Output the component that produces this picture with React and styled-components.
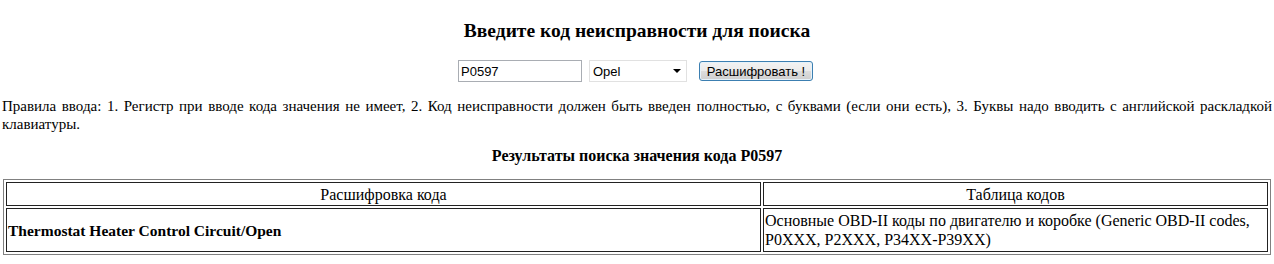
import React from 'react';
import styled, { createGlobalStyle } from 'styled-components';

const GlobalStyle = createGlobalStyle`
  body {
    margin: 0;
    background: #fff;
    color: #000;
    font-family: "Liberation Serif", "Times New Roman", serif;
  }
`;

const Page = styled.div`
  width: 1274px;
`;

const Title = styled.h3`
  margin: 20px 0 0;
  font-size: 19.5px;
  line-height: 22px;
  text-align: center;
  font-weight: bold;
`;

const SearchForm = styled.form`
  display: flex;
  justify-content: center;
  align-items: center;
  margin-top: 18px;
  padding-right: 3px;
  height: 22px;
  font-family: "Liberation Sans", Arial, sans-serif;
  font-size: 13px;
`;

const CodeInput = styled.input`
  box-sizing: border-box;
  width: 124px;
  height: 22px;
  margin: 0 7px 0 0;
  padding: 0 2px;
  border: 1px solid #a9adb3;
  font-family: inherit;
  font-size: 13px;
  color: #000;
  outline: none;
`;

const SelectWrap = styled.div`
  position: relative;
  width: 98px;
  height: 22px;
  margin-right: 12px;
`;

const Select = styled.select`
  box-sizing: border-box;
  width: 100%;
  height: 22px;
  appearance: none;
  border: 1px solid #e1e1e1;
  background: #fff;
  padding: 0 3px;
  font-family: inherit;
  font-size: 13px;
  color: #000;
  outline: none;
`;

const Caret = styled.span`
  position: absolute;
  right: 6px;
  top: 9px;
  width: 0;
  height: 0;
  border-left: 4px solid transparent;
  border-right: 4px solid transparent;
  border-top: 4px solid #000;
  pointer-events: none;
`;

const Button = styled.button`
  box-sizing: border-box;
  width: 114px;
  height: 20px;
  padding: 0;
  border: 1px solid #3c7fb1;
  border-radius: 3px;
  background: linear-gradient(#f2f2f2 0%, #ebebeb 50%, #dddddd 51%, #cfcfcf 100%);
  box-shadow: inset 0 0 0 1px #e6f2fa;
  font-family: inherit;
  font-size: 13px;
  color: #000;
`;

const Rules = styled.p`
  margin: 15px 0 0;
  padding: 0 2px;
  font-size: 15px;
  line-height: 18px;
  text-align: justify;
`;

const ResultTitle = styled.h4`
  margin: 14px 0 0;
  font-size: 16px;
  line-height: 18px;
  text-align: center;
  font-weight: bold;
`;

const Table = styled.table`
  box-sizing: border-box;
  width: 1268px;
  margin: 14px 0 0 3px;
  border: 1px solid #808080;
  border-spacing: 2px;
  table-layout: fixed;
  font-size: 16px;
`;

const Cell = styled.td`
  border: 1px solid #222;
  padding: 1px 1px;
  line-height: 19px;
  text-align: ${(p) => (p.$center ? 'center' : 'left')};
  font-weight: ${(p) => (p.$bold ? 'bold' : 'normal')};
  font-size: ${(p) => (p.$bold ? '15.5px' : '16px')};
  vertical-align: middle;
  height: ${(p) => p.$h}px;
`;

export default function App() {
  return (
    <Page>
      <GlobalStyle />
      <Title>Введите код неисправности для поиска</Title>
      <SearchForm onSubmit={(e) => e.preventDefault()}>
        <CodeInput type="text" defaultValue="P0597" />
        <SelectWrap>
          <Select defaultValue="Opel">
            <option>Opel</option>
          </Select>
          <Caret />
        </SelectWrap>
        <Button type="submit">Расшифровать !</Button>
      </SearchForm>
      <Rules>
        Правила ввода: 1. Регистр при вводе кода значения не имеет, 2. Код неисправности должен быть
        введен полностью, с буквами (если они есть), 3. Буквы надо вводить с английской раскладкой
        клавиатуры.
      </Rules>
      <ResultTitle>Результаты поиска значения кода P0597</ResultTitle>
      <Table>
        <colgroup>
          <col style={{ width: 755 }} />
          <col />
        </colgroup>
        <tbody>
          <tr>
            <Cell $center $h={20}>Расшифровка кода</Cell>
            <Cell $center $h={20}>Таблица кодов</Cell>
          </tr>
          <tr>
            <Cell $bold $h={40}>Thermostat Heater Control Circuit/Open</Cell>
            <Cell $h={40}>
              Основные OBD-II коды по двигателю и коробке (Generic OBD-II codes, P0XXX, P2XXX,
              P34XX-P39XX)
            </Cell>
          </tr>
        </tbody>
      </Table>
    </Page>
  );
}
